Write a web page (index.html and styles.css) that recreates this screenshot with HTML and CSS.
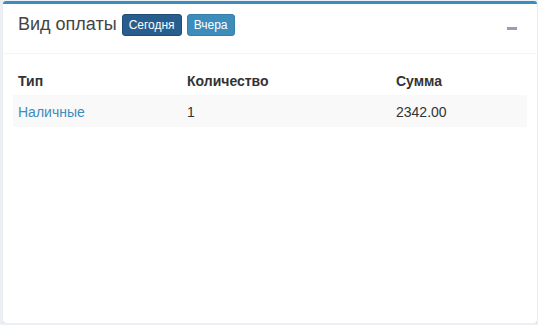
FILE: index.html
```html
<!DOCTYPE html>
<html>

<head>
  <title>Вид оплаты</title>
  <link rel="stylesheet" href="styles.css">
</head>

<body>
  <div class="box">
    <div class="box-header">
      <h3 class="box-title">Вид оплаты</h3>
      <button class="btn btn-active">Сегодня</button>
      <button class="btn">Вчера</button>
      <div class="box-tools"><span class="minus"></span></div>
    </div>
    <div class="box-body">
      <table class="table">
        <tr>
          <th class="col-type">Тип</th>
          <th class="col-count">Количество</th>
          <th>Сумма</th>
        </tr>
        <tr class="striped">
          <td><a href="#">Наличные</a></td>
          <td>1</td>
          <td>2342.00</td>
        </tr>
      </table>
    </div>
  </div>
</body>

</html>
```

FILE: styles.css
```css
body {
  margin: 0;
  padding: 1px 0 0 3px;
  background-color: #ecf0f5;
  font-family: "Liberation Sans", Arial, sans-serif;
  font-size: 14px;
  color: #333;
}

.box {
  width: 534px;
  height: 319px;
  background-color: #fff;
  border-top: 3px solid #3c8dbc;
  border-radius: 3px;
  box-shadow: 0 1px 1px rgba(0, 0, 0, 0.15);
}

.box-header {
  display: flex;
  align-items: flex-start;
  height: 39px;
  padding: 10px 20px 0 15px;
  border-bottom: 1px solid #f4f4f4;
}

.box-title {
  margin: 0 5px 0 0;
  font-size: 18px;
  font-weight: normal;
  line-height: 20px;
  color: #444;
}

.btn {
  height: 22px;
  padding: 0 6px;
  margin-right: 5px;
  font-family: inherit;
  font-size: 12px;
  line-height: 20px;
  color: #fff;
  background-color: #3c8dbc;
  border: 1px solid #367fa9;
  border-radius: 3px;
}

.btn-active {
  background-color: #285e8e;
  border-color: #204d74;
}

.box-tools {
  margin-left: auto;
  align-self: center;
  margin-top: -10px;
}

.minus {
  display: block;
  width: 10px;
  height: 3px;
  background-color: #97a0b3;
}

.box-body {
  padding: 10px;
}

.table {
  width: 100%;
  border-collapse: collapse;
}

.table th {
  padding: 7px 5px 4px;
  text-align: left;
  line-height: 20px;
  font-weight: bold;
}

.table td {
  padding: 7px 5px 5px;
  line-height: 20px;
}

.col-type {
  width: 159px;
}

.col-count {
  width: 199px;
}

.striped {
  background-color: #f9f9f9;
}

a {
  color: #3c8dbc;
  text-decoration: none;
}
```
